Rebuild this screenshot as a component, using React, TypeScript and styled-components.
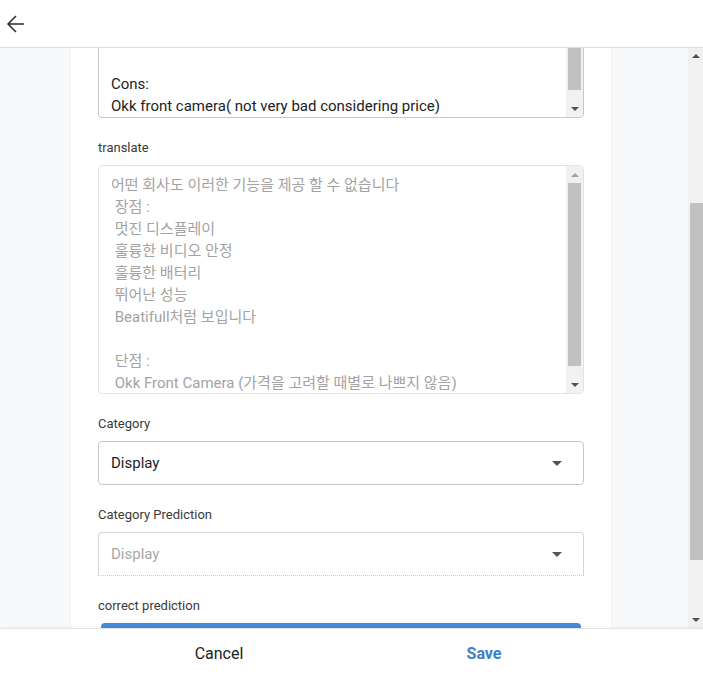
import { useLayoutEffect, useRef } from 'react';
import styled, { createGlobalStyle } from 'styled-components';

const GlobalStyle = createGlobalStyle`
    html, body {
        margin: 0;
        padding: 0;
        height: 100%;
        overflow: hidden;
        background: #fff;
        font-family: Roboto, "Noto Sans CJK KR", sans-serif;
    }
    #root {
        height: 100%;
    }
`;

const Page = styled.div`
    display: flex;
    flex-direction: column;
    height: 100vh;
`;

const Header = styled.header`
    flex: 0 0 47px;
    display: flex;
    align-items: center;
    padding-left: 4px;
    background: #fff;
    border-bottom: 1px solid #dedede;
`;

const BackButton = styled.button`
    display: flex;
    padding: 0;
    border: 0;
    background: none;
    color: #2a2a2a;
    cursor: pointer;
`;

const Body = styled.div`
    flex: 1;
    min-height: 0;
    display: flex;
`;

const Main = styled.main`
    flex: 1;
    overflow: hidden;
    background: #f8f9fa;
    padding: 16px 6px 15px 0;
    display: flex;
    flex-direction: column;
    align-items: center;
`;

// classic chrome style scrollbar, drawn by hand
const Bar = styled.div<{ $width: number }>`
    flex: 0 0 ${(p) => p.$width}px;
    display: flex;
    flex-direction: column;
    background: #f1f1f1;
`;

const Arrow = styled.div<{ $size: number; $up?: boolean; $dim?: boolean }>`
    flex: 0 0 ${(p) => p.$size}px;
    display: flex;
    align-items: center;
    justify-content: center;
    &::after {
        content: '';
        width: 0;
        height: 0;
        border-left: 4px solid transparent;
        border-right: 4px solid transparent;
        ${(p) => (p.$up ? 'border-bottom' : 'border-top')}: 4px solid ${(p) => (p.$dim ? '#a3a3a3' : '#505050')};
    }
`;

const Rail = styled.div`
    flex: 1;
    position: relative;
`;

const Thumb = styled.div<{ $inset: string }>`
    position: absolute;
    left: 0;
    right: 0;
    margin: ${(p) => p.$inset};
    background: #c1c1c1;
`;

type ScrollBarProps = {
    width: number;
    top: number;
    size: number;
    inset?: string;
    upDim?: boolean;
};

const ScrollBar = ({ width, top, size, inset = '0 2px', upDim }: ScrollBarProps) => (
    <Bar $width={width}>
        <Arrow $size={width > 15 ? 17 : 16} $up $dim={upDim} />
        <Rail>
            <Thumb $inset={inset} style={{ top, height: size }} />
        </Rail>
        <Arrow $size={width > 15 ? 17 : 16} />
    </Bar>
);

const Card = styled.section`
    width: 540px;
    box-sizing: border-box;
    flex-shrink: 0;
    background: #fff;
    box-shadow: 0 0 1px rgba(0, 0, 0, 0.12);
    padding: 24px 27px 40px;
    display: flex;
    flex-direction: column;
    gap: 22px;
`;

const Field = styled.div`
    display: flex;
    flex-direction: column;
`;

const Label = styled.label`
    font-size: 13px;
    line-height: 16px;
    color: #3a3a3a;
    margin-bottom: 9px;
`;

const TextBox = styled.div<{ $muted?: boolean }>`
    display: flex;
    box-sizing: border-box;
    height: 229px;
    background: #fff;
    border: 1px solid ${(p) => (p.$muted ? '#e3e3e3' : '#c8c8c8')};
    border-radius: 4px;
    overflow: hidden;
`;

const TextArea = styled.textarea<{ $muted?: boolean }>`
    flex: 1;
    min-width: 0;
    resize: none;
    margin: 0;
    border: 0;
    overflow: hidden;
    padding: 8px 12px;
    font-family: Roboto, "Noto Sans CJK KR", sans-serif;
    font-size: 15px;
    line-height: 22px;
    color: ${(p) => (p.$muted ? '#a3a3a3' : '#222')};
    background: transparent;
    outline: none;
`;

const Select = styled.div<{ $muted?: boolean }>`
    box-sizing: border-box;
    height: 44px;
    display: flex;
    align-items: center;
    justify-content: space-between;
    padding: 0 21px 0 12px;
    font-size: 15px;
    color: ${(p) => (p.$muted ? '#a8a8a8' : '#222')};
    border: 1px solid ${(p) => (p.$muted ? '#d6d6d6' : '#c6c6c6')};
    border-bottom: 1px ${(p) => (p.$muted ? 'dotted #cfcfcf' : 'solid #c6c6c6')};
    border-radius: 4px;
    ${(p) => p.$muted && 'border-bottom-left-radius: 0; border-bottom-right-radius: 0;'}
`;

const Caret = styled.span`
    width: 0;
    height: 0;
    border-left: 5.5px solid transparent;
    border-right: 5.5px solid transparent;
    border-top: 5.5px solid #555;
`;

const PrimaryButton = styled.button`
    height: 36px;
    margin: 0 3px;
    border: 0;
    border-radius: 4px;
    background: #448ad8;
    color: #fff;
    font-family: Roboto, sans-serif;
    font-size: 14px;
    font-weight: 500;
    text-transform: uppercase;
`;

const Footer = styled.footer`
    flex: 0 0 48px;
    display: flex;
    justify-content: center;
    background: #fff;
    border-top: 1px solid #e4e4e4;
    box-shadow: 0 -1px 3px rgba(0, 0, 0, 0.04);
`;

const FooterButton = styled.button<{ $primary?: boolean }>`
    width: 265px;
    border: 0;
    background: none;
    font-family: Roboto, sans-serif;
    font-size: 16px;
    font-weight: ${(p) => (p.$primary ? 700 : 400)};
    color: ${(p) => (p.$primary ? '#3d7fcb' : '#222')};
    cursor: pointer;
`;

const review = `No company can provide these features
Pros:
Awesome display
Great video stabilization
Great battery
Excellent performance
Looks Beatifull

Cons:
Okk front camera( not very bad considering price)`;

const translated = `어떤 회사도 이러한 기능을 제공 할 수 없습니다
 장점 :
 멋진 디스플레이
 훌륭한 비디오 안정
 훌륭한 배터리
 뛰어난 성능
 Beatifull처럼 보입니다

 단점 :
 Okk Front Camera (가격을 고려할 때별로 나쁘지 않음)`;

const App = () => {
    const mainRef = useRef<HTMLElement>(null);
    const reviewRef = useRef<HTMLTextAreaElement>(null);

    useLayoutEffect(() => {
        if (reviewRef.current) {
            const el = reviewRef.current;
            el.scrollTop = el.scrollHeight - el.clientHeight - 8;
        }
        if (mainRef.current) {
            mainRef.current.scrollTop = 224;
        }
    }, []);

    return (
        <Page>
            <GlobalStyle />
            <Header>
                <BackButton aria-label="back">
                    <svg width="24" height="24" viewBox="0 0 24 24" fill="none" stroke="currentColor" strokeWidth="1.5">
                        <path d="M12 4 4 12l8 8M4.5 12h15.5" />
                    </svg>
                </BackButton>
            </Header>
            <Body>
                <Main ref={mainRef}>
                    <Card>
                        <Field>
                            <Label>review</Label>
                            <TextBox>
                                <TextArea ref={reviewRef} readOnly value={review} />
                                <ScrollBar width={17} top={14} size={169} />
                            </TextBox>
                        </Field>
                        <Field>
                            <Label>translate</Label>
                            <TextBox $muted>
                                <TextArea $muted readOnly value={translated} />
                                <ScrollBar width={17} top={0} size={183} upDim />
                            </TextBox>
                        </Field>
                        <Field>
                            <Label>Category</Label>
                            <Select>
                                Display
                                <Caret />
                            </Select>
                        </Field>
                        <Field>
                            <Label>Category Prediction</Label>
                            <Select $muted>
                                Display
                                <Caret />
                            </Select>
                        </Field>
                        <Field>
                            <Label>correct prediction</Label>
                            <PrimaryButton>Correct</PrimaryButton>
                        </Field>
                    </Card>
                </Main>
                <ScrollBar width={15} top={139} size={357} inset="0 0 0 2px" />
            </Body>
            <Footer>
                <FooterButton>Cancel</FooterButton>
                <FooterButton $primary>Save</FooterButton>
            </Footer>
        </Page>
    );
};

export default App;
